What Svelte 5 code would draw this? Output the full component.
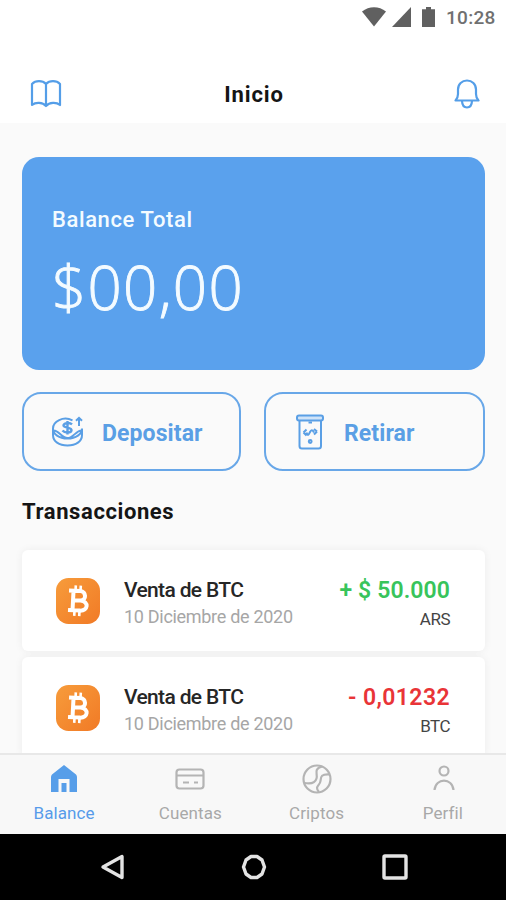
<script>
  const transactions = [
    { title: 'Venta de BTC', date: '10 Diciembre de 2020', amount: '+ $ 50.000', currency: 'ARS', kind: 'in' },
    { title: 'Venta de BTC', date: '10 Diciembre de 2020', amount: '- 0,01232', currency: 'BTC', kind: 'out' },
  ];

  const TABS = [
    ['balance', 'Balance'],
    ['cuentas', 'Cuentas'],
    ['criptos', 'Criptos'],
    ['perfil', 'Perfil'],
  ];

  let activeTab = $state('balance');
</script>

<div class="screen">
  <div class="status-bar">
    <svg class="wifi" width="24" height="20" viewBox="0 0 24 20"><path d="M0 4.5C7-1.2 17-1.2 24 4.5L12 19.5Z" /></svg>
    <svg class="signal" width="19" height="20" viewBox="0 0 19 20"><path d="M0 20L19 0V20Z" /></svg>
    <svg class="battery" width="13" height="20" viewBox="0 0 13 20"><path d="M4 0H9V2.3H13V20H0V2.3H4Z" /></svg>
    <span class="clock">10:28</span>
  </div>

  <header>
    <button aria-label="Guía">
      <svg width="32" height="28" viewBox="0 0 32 28">
        <path d="M16 4C12.5 .2 5.5 .2 2 4V25C5.5 22 12.5 22 16 26C19.5 22 26.5 22 30 25V4C26.5 .2 19.5 .2 16 4ZM16 4V26" />
      </svg>
    </button>
    <h1>Inicio</h1>
    <button aria-label="Notificaciones">
      <svg width="26" height="30" viewBox="0 0 26 30">
        <path d="M1.5 21.5C3.5 19.5 4 18 4 15V10.5C4 5 8 1.5 13 1.5S22 5 22 10.5V15C22 18 22.5 19.5 24.5 21.5ZM8 22C8.2 26.5 10 28.5 13 28.5S17.8 26.5 18 22" />
      </svg>
    </button>
  </header>

  <main>
    <section class="balance-card">
      <span class="balance-label">Balance Total</span>
      <span class="balance-value">$00,00</span>
    </section>

    <div class="actions">
      <button class="action deposit">
        <svg width="34" height="32" viewBox="0 0 34 32">
          <path d="M21.5 4.3C12-.2 2 5.5 2 12.5C2 18 8 22.5 16.5 22.5S31 18 31 12.5M2 12.5V19C2 25.5 8 29.5 16.5 29.5S31 25.5 31 19V12.5M2.5 14.5C7 13.5 10.5 22 16.5 22S25 14.5 30.5 14.5" />
          <path d="M28 10V2M25 4.8L28 1.8L31 4.8" />
          <path class="thick" d="M21 8.3C19 6.5 13 6.5 12.5 9.3S21 11 20.5 14.2S13.5 17 11.5 14.5M16.5 5V18.5" />
        </svg>
        <span>Depositar</span>
      </button>
      <button class="action withdraw">
        <svg width="28" height="36" viewBox="0 0 28 36">
          <rect class="slot" x="1" y="1.5" width="26" height="5" rx="2" />
          <path d="M3.5 6.5V32Q3.5 34.5 6 34.5H22.5Q25 34.5 25 32V6.5" />
          <path d="M7.5 18.5L10.5 15.5M7.5 18.5L10.5 21.5M21 17.5L18 15M21 17.5L18 20.5M10.5 18.5C12 23 13 20 14 18S16.5 15 18 18.5" />
          <path d="M12.5 8.5H16" />
          <circle cx="14.2" cy="27.5" r="1.4" />
        </svg>
        <span>Retirar</span>
      </button>
    </div>

    <h2>Transacciones</h2>

    <div class="list">
      {#each transactions as tx, i (i)}
        <article>
          <svg class="coin" width="44" height="46" viewBox="0 0 44 46">
            <defs>
              <linearGradient id="coin-{i}" x1="0" y1="0" x2="1" y2="1">
                <stop offset="0" stop-color="#f79c3b" />
                <stop offset="1" stop-color="#f17a26" />
              </linearGradient>
            </defs>
            <rect width="44" height="46" rx="12.5" fill="url(#coin-{i})" />
            <g transform="rotate(3 22 23)">
              <path class="coin-mark" d="M12.5 13H24C29.5 13 31 21.7 24.5 22.4H18M24.5 22.4C33.5 22.8 32.5 32.5 24.5 32.5H12.5M17 13V33" />
              <path class="coin-pins" d="M19 7.5V13M24 7.5V13M19 33V38M24 33V38" />
            </g>
          </svg>
          <div class="tx-info">
            <span class="tx-title">{tx.title}</span>
            <span class="tx-date">{tx.date}</span>
          </div>
          <div class="tx-sum">
            <span class="tx-amount {tx.kind}">{tx.amount}</span>
            <span class="tx-currency">{tx.currency}</span>
          </div>
        </article>
      {/each}
    </div>
  </main>

  <nav>
    {#each TABS as [key, label]}
      <button class="tab" class:active={activeTab === key} onclick={() => activeTab = key}>
        <svg width="30" height="30" viewBox="0 0 30 30">
          {#if key === 'balance'}
            <path class="solid" fill-rule="evenodd" d="M15 1L27 10.5Q28 11.5 28 13V28H20.5V15H9.5V28H2V13Q2 11.5 3 10.5ZM12.5 28V19H17.5V28Z" />
          {:else if key === 'cuentas'}
            <rect x="1.5" y="5.5" width="27" height="19" rx="3" />
            <path d="M1.5 11.5H28.5M8 18.5H14M19 18.5H23" />
          {:else if key === 'criptos'}
            <circle cx="15" cy="15" r="13.5" />
            <path d="M20 2.5C11 5 16 10 14.5 14.5C13 20 8 20 2.5 19M27.5 10.5C18.5 10 19 13 18.5 17C18 22 12 22 17 28" />
          {:else}
            <circle cx="16" cy="7" r="4.5" />
            <path d="M6.5 26C7.5 13.5 24.5 13.5 25.5 26" />
          {/if}
        </svg>
        <span>{label}</span>
      </button>
    {/each}
  </nav>

  <div class="system-bar">
    <svg width="26" height="28" viewBox="0 0 26 28"><path d="M22 3.5V24.5L3 14Z" /></svg>
    <svg width="26" height="28" viewBox="0 0 26 28"><path d="M10 3.5H16L21 7L23.5 14L21 21L16 24.5H10L5 21L2.5 14L5 7Z" /></svg>
    <svg width="26" height="28" viewBox="0 0 26 28"><rect x="2" y="3" width="22" height="22" rx="1" /></svg>
  </div>
</div>

<style>
  :global(body) { margin: 0; }

  .screen {
    display: flex;
    flex-direction: column;
    width: 506px;
    height: 900px;
    overflow: hidden;
    background: #fafafa;
    color: #151515;
    font-family: Roboto, "Liberation Sans", sans-serif;
  }

  svg { display: block; flex-shrink: 0; fill: none; }
  span { white-space: nowrap; }
  button {
    display: flex;
    align-items: center;
    padding: 0;
    border: none;
    background: none;
    color: inherit;
    font: inherit;
    cursor: pointer;
  }

  .status-bar {
    display: flex;
    align-items: center;
    flex-shrink: 0;
    height: 34px;
    padding: 0 10px 0 362px;
    background: #fff;
    color: #707070;
  }
  .status-bar svg { fill: #606060; }
  .signal { margin-left: 6px; }
  .battery { margin-left: 11px; }
  .clock { margin-left: 11px; padding-top: 1px; font-size: 19px; font-weight: 500; letter-spacing: 0.3px; }

  header {
    display: flex;
    align-items: center;
    justify-content: space-between;
    flex-shrink: 0;
    height: 59px;
    padding: 30px 26px 0 30px;
    margin-bottom: 34px;
    background: #fff;
  }
  header svg { stroke: #549ee8; stroke-width: 2.2; stroke-linejoin: round; }
  h1 {
    margin: 0;
    padding: 2px 8px 0 0;
    font-size: 22px;
    font-weight: 700;
    line-height: 28px;
    letter-spacing: 0.9px;
  }

  main { flex: 1; min-height: 0; padding: 0 21px 0 22px; overflow: hidden; }

  .balance-card {
    display: flex;
    flex-direction: column;
    height: 213px;
    padding: 49px 30px 0;
    box-sizing: border-box;
    border-radius: 17px;
    background: #5aa1ed;
    color: #f4fbff;
  }
  .balance-label { font-size: 22px; font-weight: 500; line-height: 28px; letter-spacing: 0.6px; }
  .balance-value {
    margin-top: 17px;
    font-family: "Open Sans", "Noto Sans", sans-serif;
    font-size: 60px;
    font-weight: 300;
    line-height: 72px;
    letter-spacing: 1.3px;
    -webkit-text-stroke: 0.9px currentColor;
  }

  .actions {
    display: grid;
    grid-template-columns: 219px 221px;
    justify-content: space-between;
    margin-top: 22px;
  }
  .action {
    height: 79px;
    padding-left: 27px;
    border: 2px solid #68a7e8;
    border-radius: 19px;
    color: #5a9fe5;
    font-size: 23px;
    font-weight: 700;
    letter-spacing: 0.1px;
  }
  .action svg { stroke: #5a9fe5; stroke-width: 2; }
  .action .thick { stroke-width: 2.4; }
  .action .slot { fill: #cfe3f8; }
  .action span { padding-top: 3px; }
  .deposit span { margin-left: 17px; }
  .withdraw { padding-left: 30px; }
  .withdraw span { margin-left: 20px; }

  h2 { margin: 26px 0 24px; font-size: 22px; font-weight: 700; line-height: 29px; letter-spacing: 0.6px; }

  .list { display: flex; flex-direction: column; gap: 6px; }
  article {
    display: flex;
    align-items: center;
    height: 101px;
    padding: 0 35px 0 34px;
    border-radius: 6px;
    background: #fff;
    box-shadow: 0 0 9px rgba(0, 0, 0, .06);
  }
  .coin-mark { stroke: #fff; stroke-width: 4; }
  .coin-pins { stroke: #fff; stroke-width: 2.6; }
  .tx-info { display: flex; flex-direction: column; margin-left: 24px; padding-top: 4px; }
  .tx-title { color: #262626; font-size: 21px; font-weight: 500; line-height: 28px; letter-spacing: -0.65px; }
  .tx-date { color: #a6a6a6; font-size: 18px; line-height: 26px; letter-spacing: -0.3px; }
  .tx-sum { display: flex; flex-direction: column; align-items: flex-end; margin-left: auto; padding-top: 8px; }
  .tx-amount { font-size: 23px; font-weight: 600; line-height: 28px; letter-spacing: 0.1px; }
  .tx-amount.in { color: #38c45b; }
  .tx-amount.out { color: #e93437; letter-spacing: 0.4px; }
  .tx-currency { margin-top: 1px; color: #444; font-size: 17px; line-height: 26px; letter-spacing: -0.5px; }

  nav {
    display: grid;
    grid-template-columns: repeat(4, 1fr);
    flex-shrink: 0;
    height: 81px;
    box-sizing: border-box;
    padding-left: 1px;
    border-top: 2px solid #e8e8e8;
    background: #f8f8f8;
  }
  .tab {
    flex-direction: column;
    padding-top: 9px;
    color: #a8a8a8;
    font-size: 17px;
    letter-spacing: 0.1px;
  }
  .tab svg { stroke: #b4b4b4; stroke-width: 2.2; }
  .tab span { margin-top: 7px; line-height: 24px; }
  .tab.active { color: #579bea; }
  .tab .solid { fill: #579ee9; stroke: none; }

  .system-bar {
    display: flex;
    align-items: center;
    justify-content: center;
    gap: 115px;
    flex-shrink: 0;
    height: 66px;
    padding-left: 1px;
    background: #000;
  }
  .system-bar svg { stroke: #e4e4e4; stroke-width: 3.4; stroke-linejoin: round; }
</style>
